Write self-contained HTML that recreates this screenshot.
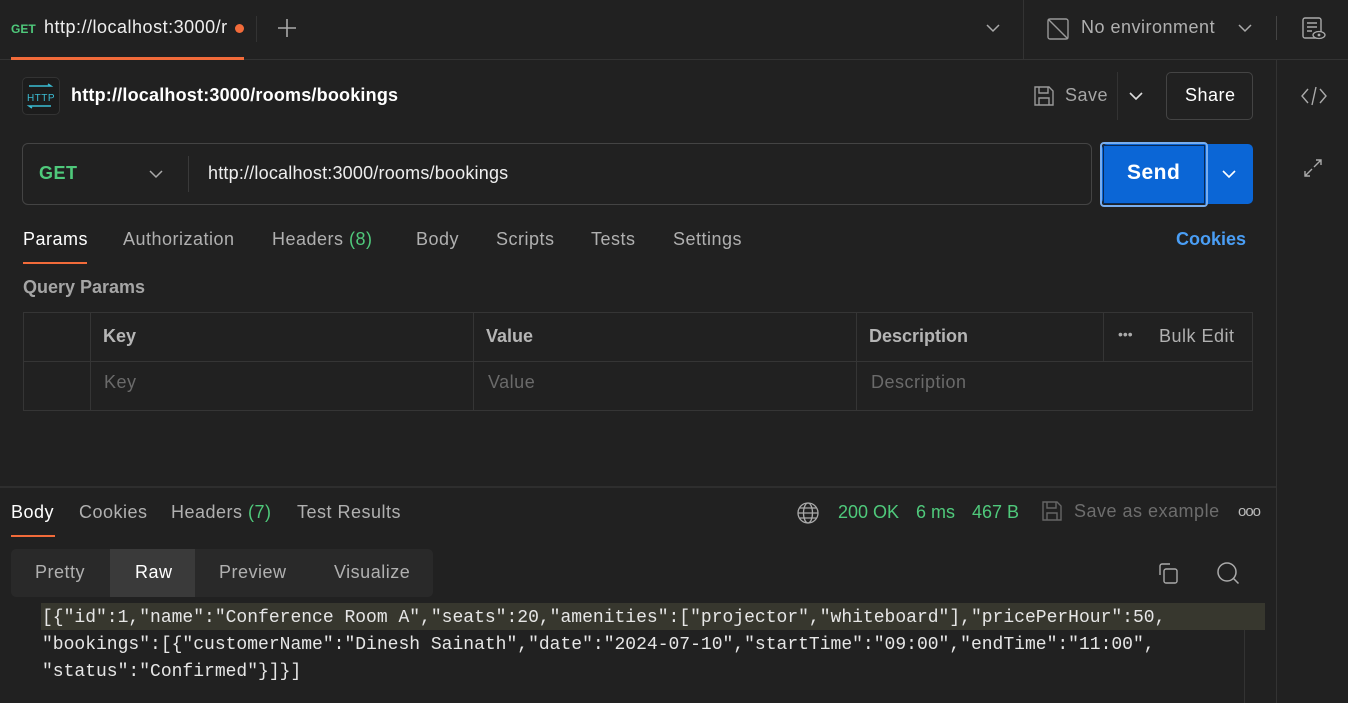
<!DOCTYPE html>
<html><head><meta charset="utf-8"><style>
*{box-sizing:border-box;margin:0;padding:0}
body{width:1348px;height:703px;background:#212121;font-family:"Liberation Sans",sans-serif;color:#ddd;position:relative;overflow:hidden;font-size:18px;letter-spacing:.5px}
.a{position:absolute;white-space:nowrap}
.g{color:#b0b0b0}
.gr{color:#4fc97b}
svg{position:absolute}
.code{font-family:"Liberation Mono",monospace;font-size:18px;color:#e6e6e6;letter-spacing:0}
</style></head><body>
<!-- top bar -->
<div class="a" style="left:0;top:59px;width:1348px;height:1px;background:#333"></div>
<div class="a" style="left:11px;top:57px;width:233px;height:3px;background:#f26b3a"></div>
<div class="a" style="left:11px;top:22px;font-size:12px;font-weight:bold;color:#4fc97b;letter-spacing:0">GET</div>
<div class="a" style="left:44px;top:17px;width:183px;overflow:hidden;color:#eee">http://localhost:3000/rooms/bookings</div>
<div class="a" style="left:235px;top:24px;width:9px;height:9px;border-radius:50%;background:#f26b3a"></div>
<div class="a" style="left:256px;top:16px;width:1px;height:26px;background:#333"></div>
<svg style="left:277px;top:18px" width="20" height="20"><path d="M10 1v18M1 10h18" stroke="#aaa" stroke-width="1.6"/></svg>
<svg style="left:985px;top:22px" width="16" height="12"><path d="M2 3l6 6 6-6" fill="none" stroke="#aaa" stroke-width="1.5"/></svg>
<div class="a" style="left:1023px;top:0;width:1px;height:59px;background:#333"></div>
<svg style="left:1046px;top:17px" width="24" height="24"><rect x="2" y="2" width="20" height="20" rx="2" fill="none" stroke="#999" stroke-width="1.4"/><path d="M2 2l20 20" stroke="#999" stroke-width="1.4"/></svg>
<div class="a g" style="left:1081px;top:17px">No environment</div>
<svg style="left:1237px;top:22px" width="16" height="12"><path d="M2 3l6 6 6-6" fill="none" stroke="#aaa" stroke-width="1.5"/></svg>
<div class="a" style="left:1276px;top:16px;width:1px;height:24px;background:#444"></div>
<svg style="left:1301px;top:16px" width="26" height="26"><rect x="2" y="2" width="18" height="20" rx="2" fill="none" stroke="#aaa" stroke-width="1.4"/><path d="M6 7h10M6 11h10M6 15h5" stroke="#aaa" stroke-width="1.4"/><ellipse cx="18" cy="19" rx="6" ry="3.5" fill="#212121" stroke="#aaa" stroke-width="1.3"/><circle cx="18" cy="19" r="1.4" fill="#aaa"/></svg>
<!-- right sidebar -->
<div class="a" style="left:1276px;top:60px;width:1px;height:643px;background:#333"></div>
<svg style="left:1300px;top:85px" width="28" height="22"><path d="M8 4l-6 7 6 7M20 4l6 7-6 7M16 2l-4 18" fill="none" stroke="#aaa" stroke-width="1.4"/></svg>
<svg style="left:1304px;top:157px" width="20" height="22"><path d="M10 10l7-7M12 3h5v5M8 12l-7 7M1 14v5h5" fill="none" stroke="#aaa" stroke-width="1.4"/></svg>
<!-- title -->
<div class="a" style="left:22px;top:77px;width:38px;height:38px;border:1px solid #333;border-radius:5px;background:#1c1c1c"></div>
<svg style="left:26px;top:82px" width="30" height="28"><path d="M3 4h22l-3-2M25 24H3l3 2" fill="none" stroke="#3bbdd4" stroke-width="1.4"/><text x="15" y="19" font-family="Liberation Sans" font-size="10" fill="#3bbdd4" text-anchor="middle">HTTP</text></svg>
<div class="a" style="left:71px;top:85px;font-weight:bold;color:#fff;letter-spacing:.2px">http://localhost:3000/rooms/bookings</div>
<svg style="left:1032px;top:84px" width="24" height="24"><path d="M3 3h14l4 4v14H3z M7 3v6h9V3 M7 21v-7h10v7" fill="none" stroke="#999" stroke-width="1.4"/></svg>
<div class="a g" style="left:1065px;top:85px;color:#a5a5a5">Save</div>
<div class="a" style="left:1117px;top:72px;width:1px;height:48px;background:#333"></div>
<svg style="left:1128px;top:90px" width="16" height="12"><path d="M2 3l6 6 6-6" fill="none" stroke="#ddd" stroke-width="1.6"/></svg>
<div class="a" style="left:1166px;top:72px;width:87px;height:48px;border:1px solid #444;border-radius:5px"></div>
<div class="a" style="left:1185px;top:85px;color:#fff">Share</div>
<!-- url bar -->
<div class="a" style="left:22px;top:143px;width:1070px;height:62px;border:1px solid #444;border-radius:6px"></div>
<div class="a" style="left:39px;top:163px;font-weight:bold;color:#4fc97b">GET</div>
<svg style="left:148px;top:168px" width="16" height="12"><path d="M2 3l6 6 6-6" fill="none" stroke="#aaa" stroke-width="1.5"/></svg>
<div class="a" style="left:188px;top:156px;width:1px;height:36px;background:#3a3a3a"></div>
<div class="a" style="left:208px;top:163px;color:#eee;letter-spacing:.2px">http://localhost:3000/rooms/bookings</div>
<div class="a" style="left:1102px;top:144px;width:151px;height:60px;background:#0b66d6;border-radius:5px"></div>
<div class="a" style="left:1100px;top:142px;width:108px;height:65px;border:2px solid #78aef0;border-radius:4px"></div>
<div class="a" style="left:1103px;top:145px;width:102px;height:59px;border:1px solid #0a2a55"></div>
<div class="a" style="left:1127px;top:161px;font-size:21px;font-weight:bold;color:#fff">Send</div>
<svg style="left:1221px;top:168px" width="16" height="12"><path d="M2 3l6 6 6-6" fill="none" stroke="#fff" stroke-width="1.6"/></svg>
<!-- tabs -->
<div class="a" style="left:23px;top:229px;color:#fff">Params</div>
<div class="a" style="left:23px;top:262px;width:64px;height:2px;background:#f26b3a"></div>
<div class="a g" style="left:123px;top:229px">Authorization</div>
<div class="a g" style="left:272px;top:229px">Headers <span class="gr">(8)</span></div>
<div class="a g" style="left:416px;top:229px">Body</div>
<div class="a g" style="left:496px;top:229px">Scripts</div>
<div class="a g" style="left:591px;top:229px">Tests</div>
<div class="a g" style="left:673px;top:229px">Settings</div>
<div class="a" style="left:1176px;top:229px;font-weight:bold;color:#4a9ef5;letter-spacing:0">Cookies</div>
<div class="a" style="left:23px;top:277px;font-weight:bold;color:#a5a5a5;letter-spacing:0">Query Params</div>
<!-- table -->
<div class="a" style="left:23px;top:312px;width:1230px;height:99px;border:1px solid #353535"></div>
<div class="a" style="left:23px;top:361px;width:1230px;height:1px;background:#353535"></div>
<div class="a" style="left:90px;top:312px;width:1px;height:99px;background:#353535"></div>
<div class="a" style="left:473px;top:312px;width:1px;height:99px;background:#353535"></div>
<div class="a" style="left:856px;top:312px;width:1px;height:99px;background:#353535"></div>
<div class="a" style="left:1103px;top:312px;width:1px;height:49px;background:#353535"></div>
<div class="a" style="left:103px;top:326px;font-weight:bold;color:#b5b5b5;letter-spacing:0">Key</div>
<div class="a" style="left:486px;top:326px;font-weight:bold;color:#b5b5b5;letter-spacing:0">Value</div>
<div class="a" style="left:869px;top:326px;font-weight:bold;color:#b5b5b5;letter-spacing:0">Description</div>
<div class="a" style="left:1118px;top:326px;color:#aaa;font-size:14px;letter-spacing:0">•••</div>
<div class="a g" style="left:1159px;top:326px">Bulk Edit</div>
<div class="a" style="left:104px;top:372px;color:#6a6a6a">Key</div>
<div class="a" style="left:488px;top:372px;color:#6a6a6a">Value</div>
<div class="a" style="left:871px;top:372px;color:#6a6a6a">Description</div>
<!-- response -->
<div class="a" style="left:0;top:486px;width:1276px;height:2px;background:#2e2e2e"></div>
<div class="a" style="left:11px;top:502px;color:#fff">Body</div>
<div class="a" style="left:11px;top:535px;width:44px;height:2px;background:#f26b3a"></div>
<div class="a g" style="left:79px;top:502px">Cookies</div>
<div class="a g" style="left:171px;top:502px">Headers <span class="gr">(7)</span></div>
<div class="a g" style="left:297px;top:502px">Test Results</div>
<svg style="left:796px;top:501px" width="24" height="24"><circle cx="12" cy="12" r="10" fill="none" stroke="#aaa" stroke-width="1.3"/><ellipse cx="12" cy="12" rx="4.5" ry="10" fill="none" stroke="#aaa" stroke-width="1.3"/><path d="M2 12h20M4 7h16M4 17h16" stroke="#aaa" stroke-width="1.2"/></svg>
<div class="a gr" style="left:838px;top:502px;letter-spacing:0">200 OK</div>
<div class="a gr" style="left:916px;top:502px;letter-spacing:0">6 ms</div>
<div class="a gr" style="left:972px;top:502px;letter-spacing:0">467 B</div>
<svg style="left:1040px;top:499px" width="24" height="24"><path d="M3 3h14l4 4v14H3z M7 3v6h9V3 M7 21v-7h10v7" fill="none" stroke="#666" stroke-width="1.4"/></svg>
<div class="a" style="left:1074px;top:501px;color:#6d6d6d">Save as example</div>
<div class="a" style="left:1238px;top:503px;color:#bbb;font-size:15px;letter-spacing:-1px">ooo</div>
<div class="a" style="left:11px;top:549px;width:422px;height:48px;background:#292929;border-radius:5px"></div>
<div class="a" style="left:110px;top:549px;width:85px;height:48px;background:#3a3a3a"></div>
<div class="a g" style="left:35px;top:562px">Pretty</div>
<div class="a" style="left:135px;top:562px;color:#fff">Raw</div>
<div class="a g" style="left:219px;top:562px">Preview</div>
<div class="a g" style="left:334px;top:562px">Visualize</div>
<svg style="left:1156px;top:561px" width="26" height="26"><path d="M4 14V5a2 2 0 0 1 2-2h8" fill="none" stroke="#aaa" stroke-width="1.4"/><rect x="8" y="8" width="13" height="14" rx="2" fill="none" stroke="#aaa" stroke-width="1.4"/></svg>
<svg style="left:1215px;top:560px" width="28" height="28"><circle cx="12" cy="12" r="9" fill="none" stroke="#aaa" stroke-width="1.5"/><path d="M18.5 18.5l5 5" stroke="#aaa" stroke-width="1.5"/></svg>
<div class="a" style="left:41px;top:603px;width:1224px;height:27px;background:#37372e"></div>
<div class="a" style="left:1244px;top:630px;width:1px;height:73px;background:#333"></div>
<div class="a code" style="left:42px;top:608px">[{"id":1,"name":"Conference Room A","seats":20,"amenities":["projector","whiteboard"],"pricePerHour":50,</div>
<div class="a code" style="left:42px;top:635px">"bookings":[{"customerName":"Dinesh Sainath","date":"2024-07-10","startTime":"09:00","endTime":"11:00",</div>
<div class="a code" style="left:42px;top:662px">"status":"Confirmed"}]}]</div>
</body></html>
